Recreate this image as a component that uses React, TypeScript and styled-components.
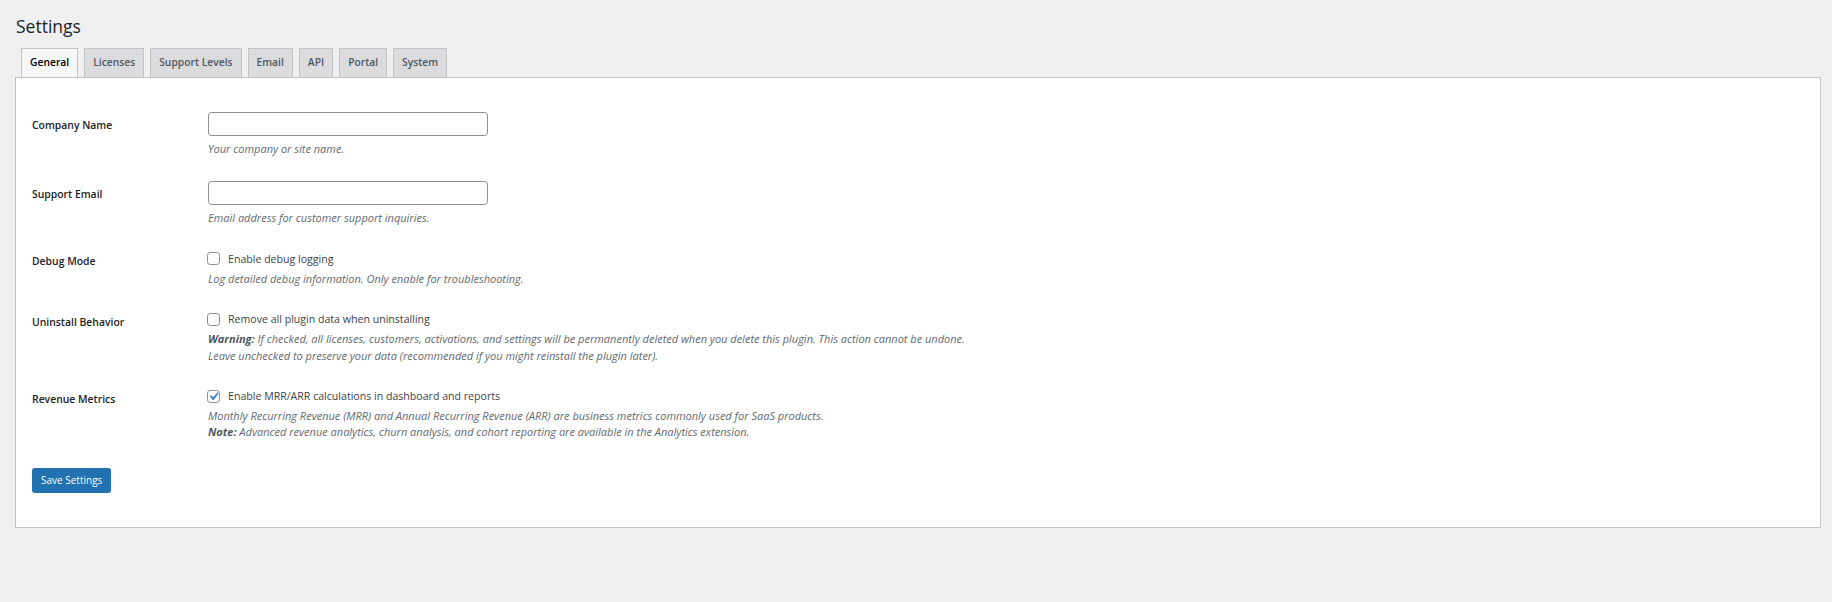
import React, { useState } from "react";
import styled, { createGlobalStyle } from "styled-components";

const FONT = `"Open Sans", "Noto Sans", "Liberation Sans", sans-serif`;

const COLOR = {
  PAGE: "#f0f0f1",
  BORDER: "#c3c4c7",
  TEXT: "#1d2327",
  BODY: "#3c434a",
  MUTED: "#646970",
  TAB_BG: "#dcdcde",
  TAB_TEXT: "#50575e",
  INPUT_BORDER: "#8c8f94",
  BLUE: "#2271b1",
  CHECK: "#3582c4",
};

const GlobalStyle = createGlobalStyle`
  html, body {
    margin: 0;
    padding: 0;
    background: ${COLOR.PAGE};
    font-family: ${FONT};
    color: ${COLOR.BODY};
  }
  * {
    box-sizing: border-box;
  }
`;

const TABS = ["General", "Licenses", "Support Levels", "Email", "API", "Portal", "System"];

type Row =
  | { kind: "text"; label: string; description: React.ReactNode }
  | { kind: "check"; label: string; text: string; checked: boolean; description: React.ReactNode[] };

const ROWS: Row[] = [
  { kind: "text", label: "Company Name", description: "Your company or site name." },
  { kind: "text", label: "Support Email", description: "Email address for customer support inquiries." },
  {
    kind: "check",
    label: "Debug Mode",
    text: "Enable debug logging",
    checked: false,
    description: ["Log detailed debug information. Only enable for troubleshooting."],
  },
  {
    kind: "check",
    label: "Uninstall Behavior",
    text: "Remove all plugin data when uninstalling",
    checked: false,
    description: [
      <>
        <strong>Warning:</strong> If checked, all licenses, customers, activations, and settings will be
        permanently deleted when you delete this plugin. This action cannot be undone.
      </>,
      "Leave unchecked to preserve your data (recommended if you might reinstall the plugin later).",
    ],
  },
  {
    kind: "check",
    label: "Revenue Metrics",
    text: "Enable MRR/ARR calculations in dashboard and reports",
    checked: true,
    description: [
      "Monthly Recurring Revenue (MRR) and Annual Recurring Revenue (ARR) are business metrics commonly used for SaaS products.",
      <>
        <strong>Note:</strong> Advanced revenue analytics, churn analysis, and cohort reporting are available in
        the Analytics extension.
      </>,
    ],
  },
];

const CheckBox = ({ checked, onChange }: { checked: boolean; onChange: () => void }) => (
  <Box type="button" role="checkbox" aria-checked={checked} onClick={onChange}>
    {checked && (
      <svg viewBox="0 0 20 20" width="17" height="17">
        <path d="M14.83 4.89l1.34.94-5.81 8.38H9.02L5.78 9.67l1.34-1.25 2.57 2.4z" fill={COLOR.CHECK} />
      </svg>
    )}
  </Box>
);

export default function App() {
  const [active, set_active] = useState("General");
  const [checks, set_checks] = useState<Record<string, boolean>>(() =>
    Object.fromEntries(ROWS.filter((r) => r.kind === "check").map((r) => [r.label, (r as any).checked]))
  );

  const toggle = (label: string) => set_checks((prev) => ({ ...prev, [label]: !prev[label] }));

  return (
    <>
      <GlobalStyle />
      <Wrap>
        <Title>Settings</Title>
        <TabBar>
          {TABS.map((name) => (
            <Tab key={name} $active={name === active} onClick={() => set_active(name)}>
              {name}
            </Tab>
          ))}
        </TabBar>
        <Panel>
          {ROWS.map((row) => (
            <FormRow key={row.label}>
              <Label $offset={row.kind === "text" ? 18 : 15.5}>{row.label}</Label>
              <Field>
                {row.kind === "text" ? (
                  <>
                    <TextInput type="text" />
                    <Description $gap={5}>{row.description}</Description>
                  </>
                ) : (
                  <>
                    <CheckLine>
                      <CheckBox checked={checks[row.label]} onChange={() => toggle(row.label)} />
                      <span>{row.text}</span>
                    </CheckLine>
                    {row.description.map((line, i) => (
                      <Description key={i} $gap={i === 0 ? 4 : 0}>
                        {line}
                      </Description>
                    ))}
                  </>
                )}
              </Field>
            </FormRow>
          ))}
          <SaveButton type="button">Save Settings</SaveButton>
        </Panel>
      </Wrap>
    </>
  );
}

const Wrap = styled.div`
  padding: 8px 11px 0 15px;
`;

const Title = styled.h1`
  margin: 0;
  padding: 6px 0 4px 1px;
  font-size: 17.5px;
  line-height: 24px;
  font-weight: 400;
  color: ${COLOR.TEXT};
`;

const TabBar = styled.div`
  display: flex;
  align-items: flex-end;
  gap: 6px;
  margin-top: 6px;
  padding-left: 6px;
`;

const Tab = styled.button<{ $active: boolean }>`
  font-family: ${FONT};
  font-size: 10.3px;
  font-weight: 600;
  line-height: 19px;
  padding: 4px 8px 5px;
  border: 1px solid ${COLOR.BORDER};
  border-bottom: none;
  border-radius: 0;
  background: ${(p) => (p.$active ? "#f6f7f7" : COLOR.TAB_BG)};
  color: ${(p) => (p.$active ? "#000" : COLOR.TAB_TEXT)};
  cursor: pointer;
`;

const Panel = styled.div`
  background: #fff;
  border: 1px solid ${COLOR.BORDER};
  padding: 22px 16px 34px;
`;

const FormRow = styled.div`
  display: grid;
  grid-template-columns: 176px 1fr;
`;

const Label = styled.div<{ $offset: number }>`
  padding-top: ${(p) => p.$offset}px;
  font-size: 10.4px;
  line-height: 14.5px;
  font-weight: 600;
  color: ${COLOR.TEXT};
`;

const Field = styled.div`
  padding: 12px 0;
`;

const TextInput = styled.input`
  display: block;
  width: 280px;
  height: 24px;
  margin: 0;
  padding: 0 6px;
  border: 1px solid ${COLOR.INPUT_BORDER};
  border-radius: 3.2px;
  background: #fff;
  font-family: ${FONT};
  font-size: 11px;
  color: ${COLOR.TEXT};
`;

const Description = styled.p<{ $gap: number }>`
  margin: ${(p) => p.$gap}px 0 0;
  font-size: 11px;
  line-height: 16.4px;
  font-style: italic;
  color: ${COLOR.MUTED};
  strong {
    font-weight: 700;
    color: #50575e;
  }
`;

const CheckLine = styled.label`
  display: flex;
  align-items: center;
  gap: 8px;
  height: 16px;
  font-size: 10.6px;
  color: ${COLOR.BODY};
  cursor: pointer;
`;

const Box = styled.button`
  display: flex;
  align-items: center;
  justify-content: center;
  width: 13px;
  height: 13px;
  padding: 0;
  margin: 0 0 0 -1px;
  border: 1px solid ${COLOR.INPUT_BORDER};
  border-radius: 3.2px;
  background: #fff;
  cursor: pointer;
  svg {
    flex: none;
  }
`;

const SaveButton = styled.button`
  margin-top: 15px;
  height: 25px;
  padding: 0 8px;
  border: 1px solid ${COLOR.BLUE};
  border-radius: 2.4px;
  background: ${COLOR.BLUE};
  color: #fff;
  font-family: ${FONT};
  font-size: 10px;
  cursor: pointer;
`;
